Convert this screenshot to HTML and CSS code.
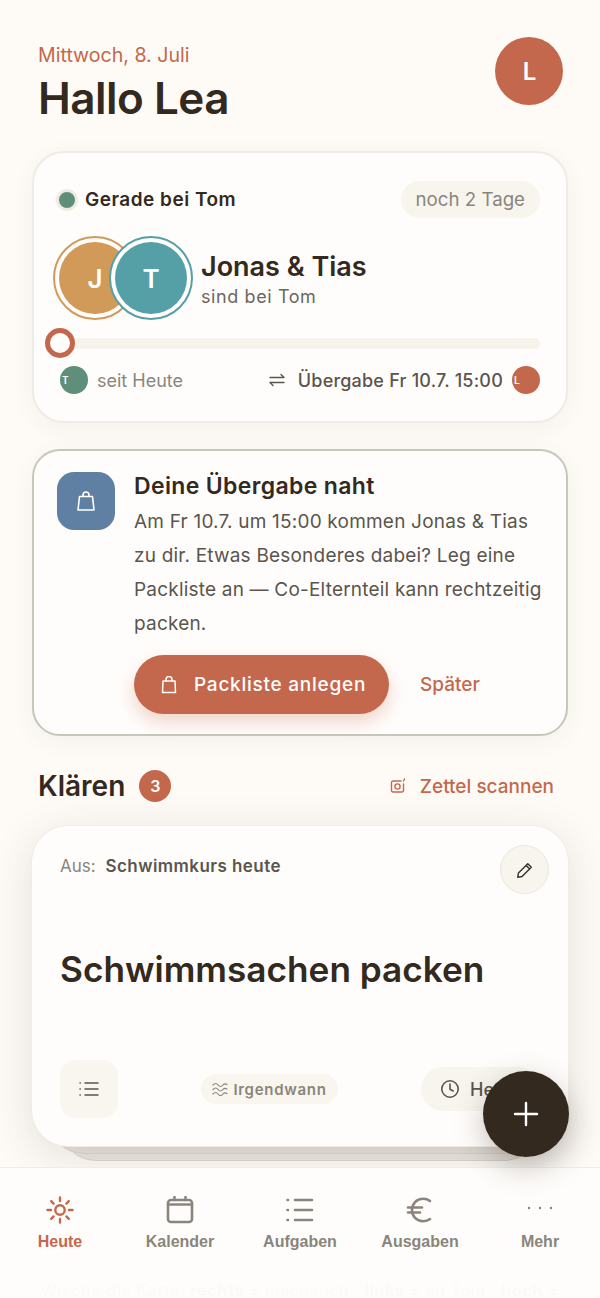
FILE: index.html
```html
<!doctype html>
<html lang="de">
  <head>
    <meta name="viewport" content="width=device-width, initial-scale=1.0" />
    <meta http-equiv="Content-Type" content="text/html; charset=utf-8" />
    <title>Heute</title>
    <link rel="stylesheet" href="styles.css">
  </head>
  <body>
    <div class="page">
      <header class="top">
        <div>
          <p class="date">Mittwoch, 8. Juli</p>
          <h1 class="hello">Hallo Lea</h1>
        </div>
        <div class="me">L</div>
      </header>

      <section class="card now">
        <div class="now-head">
          <div class="status"><span class="dot"></span>Gerade bei Tom</div>
          <span class="left-pill">noch 2 Tage</span>
        </div>
        <div class="kids">
          <div class="kid-stack">
            <div class="kid kid-j"><span>J</span></div>
            <div class="kid kid-t"><span>T</span></div>
          </div>
          <div class="kid-text">
            <div class="kid-names">Jonas &amp; Tias</div>
            <div class="kid-sub">sind bei Tom</div>
          </div>
        </div>
        <div class="track"><span class="thumb"></span></div>
        <div class="now-foot">
          <div class="foot-side">
            <span class="mini mini-t">T</span>
            <span class="since">seit Heute</span>
          </div>
          <div class="foot-side">
            <svg class="swap" width="16" height="14" viewBox="0 0 16 14" fill="none" stroke="#5a554d" stroke-width="1.4" stroke-linecap="round" stroke-linejoin="round"><path d="M1 4.500h14M12 1.500l3 3M15 9.500H1M4 12.500l-3-3"/></svg>
            <span class="handover">Übergabe Fr 10.7. 15:00</span>
            <span class="mini mini-l">L</span>
          </div>
        </div>
      </section>

      <section class="card notice">
        <div class="notice-icon">
          <svg width="20" height="22" viewBox="0 0 20 22" fill="none" stroke="#fff" stroke-width="1.6" stroke-linejoin="round"><path d="M3.500 6.500h13l1.500 13.500h-16zM7 6.500v-1.500a3 3 0 0 1 6 0v1.500"/></svg>
        </div>
        <div class="notice-body">
          <h2 class="notice-title">Deine Übergabe naht</h2>
          <p class="notice-text">Am Fr 10.7. um 15:00 kommen Jonas &amp; Tias zu dir. Etwas Besonderes dabei? Leg eine Packliste an — Co-Elternteil kann rechtzeitig packen.</p>
          <div class="notice-actions">
            <button class="btn-main">
              <svg width="16" height="18" viewBox="0 0 16 18" fill="none" stroke="#fff" stroke-width="1.5" stroke-linejoin="round"><path d="M2 5h12l.5 11.500h-13zM5 5v-1.500a3 3 0 0 1 6 0v1.500"/></svg>
              Packliste anlegen
            </button>
            <span class="later">Später</span>
          </div>
        </div>
      </section>

      <div class="section-head">
        <div class="section-title">
          <h2>Klären</h2>
          <span class="count">3</span>
        </div>
        <div class="scan">
          <svg width="16" height="16" viewBox="0 0 16 16" fill="none" stroke="#c4684d" stroke-width="1.4" stroke-linecap="round" stroke-linejoin="round"><path d="M11 3H3a1.500 1.500 0 0 0-1.500 1.500v8A1.500 1.500 0 0 0 3 14h9a1.500 1.500 0 0 0 1.500-1.500V6"/><circle cx="7.500" cy="8.500" r="2.600"/><path d="M13.500 3l1-2"/></svg>
          Zettel scannen
        </div>
      </div>

      <div class="deck">
        <div class="deck-back deck-back-2"></div>
        <div class="deck-back deck-back-1"></div>
        <section class="task">
          <div class="task-top">
            <div class="task-from">Aus: <b>Schwimmkurs heute</b></div>
            <button class="task-edit">
              <svg width="20" height="20" viewBox="0 0 18 18" fill="none" stroke="#3a322b" stroke-width="1.300" stroke-linejoin="round" stroke-linecap="round"><path d="M2.500 15.500l.6-3.800 8.400-8.400 3.200 3.200-8.400 8.400zM10 5l3.200 3.200"/></svg>
            </button>
          </div>
          <h3 class="task-title">Schwimmsachen packen</h3>
          <div class="task-foot">
            <button class="task-list">
              <svg width="20" height="16" viewBox="0 0 20 16" fill="none" stroke="#5a554d" stroke-width="1.500" stroke-linecap="round"><path d="M6 2h13M6 8h13M6 14h13M1 2h.3M1 8h.3M1 14h.3"/></svg>
            </button>
            <span class="when">
              <svg width="16" height="14" viewBox="0 0 16 14" fill="none" stroke="#8a857c" stroke-width="1.200" stroke-linecap="round"><path d="M1 3c2-2 3.500-2 5 0s3.500 2 5 0 2.500-1.500 4-.5M1 7.500c2-2 3.500-2 5 0s3.500 2 5 0 2.500-1.500 4-.5M1 12c2-2 3.500-2 5 0s3.500 2 5 0 2.500-1.500 4-.5"/></svg>
              Irgendwann
            </span>
            <span class="today">
              <svg width="20" height="20" viewBox="0 0 20 20" fill="none" stroke="#5a554d" stroke-width="1.600" stroke-linecap="round" stroke-linejoin="round"><circle cx="10" cy="10" r="8.200"/><path d="M10 5v5.200l3.200 1.800"/></svg>
              Heute
            </span>
          </div>
        </section>
      </div>

      <p class="hint">Wische die Karte: <b>rechts</b> = mache ich · <b>links</b> = an Tom · <b>hoch</b> =</p>

      <button class="fab">
        <svg width="28" height="28" viewBox="0 0 28 28" fill="none" stroke="#fff" stroke-width="2.400" stroke-linecap="round"><path d="M14 3v22M3 14h22"/></svg>
      </button>

      <nav class="tabs">
        <div class="tab tab-on">
          <svg width="28" height="28" viewBox="0 0 28 28" fill="none" stroke="#c4684d" stroke-width="2.400" stroke-linecap="round"><circle cx="14" cy="14" r="4.700"/><path d="M14 1.500v3.500M14 23v3.500M1.500 14h3.500M23 14h3.500M5.200 5.200l2.400 2.400M20.400 20.400l2.400 2.400M5.200 22.800l2.400-2.400M20.400 7.600l2.400-2.400"/></svg>
          <span>Heute</span>
        </div>
        <div class="tab">
          <svg width="28" height="28" viewBox="0 0 28 28" fill="none" stroke="#8a857c" stroke-width="2.600" stroke-linecap="round" stroke-linejoin="round"><rect x="2" y="4" width="24" height="22" rx="3"/><path d="M2 8.500h24M8.500 1v3M19.500 1v3"/></svg>
          <span>Kalender</span>
        </div>
        <div class="tab">
          <svg width="28" height="28" viewBox="0 0 28 28" fill="none" stroke="#8a857c" stroke-width="2.600" stroke-linecap="round"><path d="M9 4h17M9 14h17M9 24h17M1.500 4h.5M1.500 14h.5M1.500 24h.5"/></svg>
          <span>Aufgaben</span>
        </div>
        <div class="tab">
          <svg width="28" height="28" viewBox="0 0 28 28" fill="none" stroke="#8a857c" stroke-width="2.600" stroke-linecap="round"><path d="M24 5a11 11 0 0 0-7-2.200c-6.500 0-11 5-11 11.200s4.500 11.200 11 11.200a11 11 0 0 0 7-2.200M2 11.500h14M2 16.500h12"/></svg>
          <span>Ausgaben</span>
        </div>
        <div class="tab">
          <svg width="28" height="28" viewBox="0 0 28 28" fill="#8a857c"><circle cx="3" cy="12" r="1.200"/><circle cx="14" cy="12" r="1.200"/><circle cx="25" cy="12" r="1.200"/></svg>
          <span>Mehr</span>
        </div>
      </nav>
    </div>
  </body>
</html>
```
FILE: styles.css
```css
/* body tags */
* { box-sizing: border-box; }
body {
    margin: 0;
    background: #fefbf7;
    color: #33291f;
    font-family: Inter, "Liberation Sans", sans-serif;
}
h1, h2, h3, p { margin: 0; }
button {
    border: 0;
    font-family: inherit;
    padding: 0;
}
svg { flex: none; }
/* page */
.page {
    height: 1298px;
    overflow: hidden;
    padding: 37px 32px 0;
    position: relative;
    width: 600px;
}
.top {
    align-items: flex-start;
    display: flex;
    justify-content: space-between;
    padding: 0 5px 0 6px;
}
.date {
    color: #c4684d;
    font-size: 19.6px;
    line-height: 34px;
    padding-top: 1px;
    height: 35px;
}
.hello {
    font-size: 44px;
    font-weight: 600;
    letter-spacing: -0.5px;
    line-height: 52px;
}
.me {
    align-items: center;
    background: #c4684d;
    border-radius: 50%;
    color: #fff;
    display: flex;
    font-size: 24px;
    font-weight: 600;
    height: 68px;
    justify-content: center;
    padding-left: 1px;
    width: 68px;
}
/* cards */
.card {
    background: #fffdfb;
    box-shadow: 0 6px 24px rgba(60,45,30,0.05);
}
.now {
    border: 2px solid #efebe5;
    border-radius: 32px;
    height: 272px;
    margin-top: 27px;
    padding: 28px 26px 0 26px;
}
.now-head {
    align-items: center;
    display: flex;
    justify-content: space-between;
}
.status {
    align-items: center;
    display: flex;
    font-size: 19px;
    font-weight: 600;
    gap: 7px;
    letter-spacing: 0.5px;
}
.dot {
    background: #5f8f7a;
    border: 3px solid #f0ebe2;
    border-radius: 50%;
    box-sizing: content-box;
    height: 16px;
    margin-left: -4px;
    width: 16px;
}
.left-pill {
    background: #f8f5ef;
    border-radius: 19px;
    color: #8a857c;
    font-size: 18.7px;
    line-height: 37px;
    padding: 0 15px;
}
.kids {
    align-items: center;
    display: flex;
    gap: 8px;
    margin-top: 18px;
}
.kid-stack {
    display: flex;
    margin-left: -7px;
}
.kid {
    align-items: center;
    background: #fffdfb;
    border: 2px solid;
    border-radius: 50%;
    display: flex;
    height: 84px;
    justify-content: center;
    padding: 4px;
    width: 84px;
}
.kid span {
    align-items: center;
    border-radius: 50%;
    color: #fff;
    display: flex;
    font-size: 26px;
    font-weight: 600;
    height: 100%;
    justify-content: center;
    width: 100%;
}
.kid-j { border-color: #d29a58; }
.kid-j span { background: #d29a58; }
.kid-t {
    border-color: #559fa6;
    margin-left: -28px;
    position: relative;
}
.kid-t span { background: #559fa6; }
.kid-text { padding-top: 6px; }
.kid-names {
    font-size: 27px;
    font-weight: 600;
    line-height: 32px;
}
.kid-sub {
    color: #6b665e;
    font-size: 18px;
    letter-spacing: 0.6px;
    line-height: 28px;
}
.track {
    background: #f6f3ec;
    border-radius: 6px;
    height: 11px;
    margin: 18px 0 0 0;
    position: relative;
}
.thumb {
    background: #fffdfb;
    border: 5px solid #c4684d;
    border-radius: 50%;
    height: 30px;
    left: -15px;
    position: absolute;
    top: -10px;
    width: 30px;
}
.now-foot {
    align-items: center;
    display: flex;
    justify-content: space-between;
    margin: 17px 0 0 0;
}
.foot-side {
    align-items: center;
    display: flex;
}
.mini {
    border-radius: 50%;
    color: #fff;
    font-size: 10px;
    font-weight: 600;
    height: 28px;
    line-height: 28px;
    padding-left: 2px;
    width: 28px;
}
.mini-t { background: #5f8f7a; }
.mini-l {
    background: #c4684d;
    margin-left: 9px;
}
.since {
    color: #8a857c;
    font-size: 18px;
    margin-left: 9px;
}
.swap { margin-right: 13px; }
.handover {
    color: #5a554d;
    font-size: 18px;
    font-weight: 500;
    letter-spacing: 0.2px;
}
.notice {
    border: 2px solid #c6c8bc;
    border-radius: 28px;
    display: flex;
    gap: 19px;
    height: 287px;
    margin-top: 26px;
    padding: 21px 23px;
}
.notice-icon {
    align-items: center;
    background: #5f7fa3;
    border-radius: 17px;
    display: flex;
    flex: none;
    height: 58px;
    justify-content: center;
    width: 58px;
}
.notice-title {
    font-size: 23px;
    font-weight: 600;
    letter-spacing: 0.35px;
    line-height: 29px;
}
.notice-text {
    color: #5a554d;
    font-size: 19px;
    letter-spacing: 0.2px;
    line-height: 34px;
    margin-top: 4px;
}
.notice-actions {
    align-items: center;
    display: flex;
    gap: 31px;
    margin-top: 14px;
}
.btn-main {
    align-items: center;
    background: #c4684d;
    border-radius: 30px;
    box-shadow: 0 8px 18px rgba(196,104,77,0.28);
    color: #fff;
    display: flex;
    font-size: 19px;
    font-weight: 500;
    gap: 17px;
    height: 59px;
    letter-spacing: 0.75px;
    padding: 0 23px 0 27px;
}
.later {
    color: #c4684d;
    font-size: 19px;
    font-weight: 500;
}
.section-head {
    align-items: center;
    display: flex;
    justify-content: space-between;
    margin-top: 30px;
    padding: 0 14px 0 6px;
}
.section-title {
    align-items: center;
    display: flex;
    gap: 14px;
}
.section-title h2 {
    font-size: 28px;
    font-weight: 600;
    line-height: 40px;
}
.count {
    background: #c4684d;
    border-radius: 50%;
    color: #fff;
    font-size: 16px;
    font-weight: 600;
    height: 32px;
    line-height: 32px;
    text-align: center;
    width: 32px;
}
.scan {
    align-items: center;
    color: #c4684d;
    display: flex;
    font-size: 19px;
    font-weight: 500;
    gap: 14px;
}
/* task deck */
.deck {
    height: 334px;
    margin-top: 20px;
    position: relative;
}
.deck-back {
    border-radius: 36px;
    position: absolute;
}
.deck-back-1 {
    background: #e6e2dc;
    bottom: 7px;
    box-shadow: 0 1px 0 #dcd8d1;
    height: 100px;
    left: 16px;
    right: 16px;
}
.deck-back-2 {
    background: #ebe7e1;
    bottom: 0;
    box-shadow: 0 1px 0 #dcd8d1;
    height: 100px;
    left: 28px;
    right: 28px;
}
.task {
    background: #fffdfb;
    border-radius: 36px;
    box-shadow: 0 0 0 1px #f0ece6, 0 10px 44px rgba(60,45,30,0.14);
    height: 320px;
    padding: 19px 19px 28px 28px;
    position: relative;
}
.task-top {
    align-items: flex-start;
    display: flex;
    justify-content: space-between;
}
.task-from {
    color: #8a857c;
    font-size: 17px;
    line-height: 42px;
}
.task-from b {
    color: #5a554d;
    font-weight: 600;
    letter-spacing: 0.45px;
    margin-left: 5px;
}
.task-edit {
    align-items: center;
    background: #f8f5ef;
    border: 1px solid #ebe7df;
    border-radius: 50%;
    display: flex;
    height: 49px;
    justify-content: center;
    width: 49px;
}
.task-title {
    font-size: 35.200px;
    font-weight: 600;
    line-height: 44px;
    margin-top: 53px;
}
.task-foot {
    align-items: center;
    display: flex;
    justify-content: space-between;
    margin-top: 69px;
    padding-right: 9px;
}
.task-list {
    align-items: center;
    background: #f9f5ef;
    border-radius: 16px;
    display: flex;
    height: 58px;
    justify-content: center;
    width: 58px;
}
.when {
    align-items: center;
    background: #f9f5ef;
    border-radius: 15px;
    color: #8a857c;
    display: flex;
    font-size: 15px;
    font-weight: 600;
    gap: 5px;
    height: 30px;
    letter-spacing: 0.7px;
    padding: 0 11px;
}
.today {
    align-items: center;
    background: #f8f5ef;
    border-radius: 22px;
    color: #5a554d;
    display: flex;
    font-size: 18px;
    font-weight: 500;
    gap: 10px;
    height: 44px;
    padding: 0 0 0 19px;
    white-space: nowrap;
    width: 119px;
}
.hint {
    color: #8a857c;
    font-size: 16.500px;
    letter-spacing: 0.4px;
    line-height: 16px;
    margin-top: 122px;
    text-align: center;
    white-space: nowrap;
}
/* overlays */
.fab {
    align-items: center;
    background: #33291f;
    border-radius: 50%;
    box-shadow: 0 10px 30px rgba(50,40,30,0.28);
    display: flex;
    height: 86px;
    justify-content: center;
    left: 483px;
    position: absolute;
    top: 1071px;
    width: 86px;
    z-index: 3;
}
.tabs {
    background: rgba(255,253,251,0.97);
    border-top: 1px solid #f0ece6;
    display: grid;
    grid-template-columns: repeat(5, 120px);
    height: 131px;
    left: 0;
    padding-top: 28px;
    position: absolute;
    top: 1167px;
    width: 600px;
    z-index: 2;
}
.tab {
    align-items: center;
    color: #8a857c;
    display: flex;
    flex-direction: column;
    font-family: "Liberation Sans", Arial, sans-serif;
    font-size: 16px;
    font-weight: 700;
    gap: 9px;
}
.tab-on { color: #c4684d; }
```
